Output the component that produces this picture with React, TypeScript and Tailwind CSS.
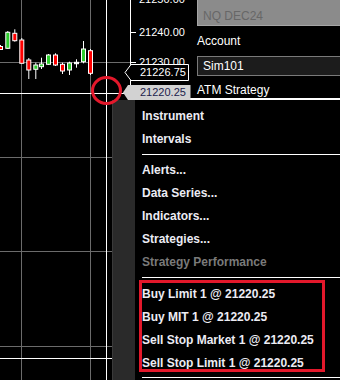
import React from 'react';

// Chart context menu with order entry (NinjaTrader-like)

const R = '#ff0000';
const G = '#2ecc2e';
const W = '#ffffff';

// [left, bodyTop, bodyBottom, wickTop, wickBottom, color]
const CANDLES: [number, number, number, number, number, string][] = [
  [-2, 46.5, 49.5, 45, 50, R],
  [5.3, 32.3, 48.3, 31, 49, G],
  [12.3, 33.3, 40.7, 29.3, 41.7, R],
  [19.3, 40, 63.3, 38, 63.3, R],
  [26.3, 60, 70, 58, 79, R],
  [33.3, 65, 69.3, 62.7, 79, G],
  [39, 64, 66.7, 57.7, 69, G],
  [46, 55, 64.3, 54, 65, G],
  [53, 55, 65, 53.3, 66, R],
  [60, 64.3, 71, 62.7, 74, R],
  [67, 63, 70, 61.7, 75, G],
  [74, 62.3, 63.7, 59.3, 67.7, W],
  [81, 49, 61.7, 41, 63.3, G],
  [88, 50.7, 73.3, 49, 75, R],
];

const ChartArea = () => (
  <div className="w-[130px] h-full shrink-0">
    <svg width="130" height="380" viewBox="0 0 130 380">
      <g stroke="#6b6b6b" strokeWidth="1" shapeRendering="crispEdges">
        <line x1="21.5" y1="0" x2="21.5" y2="380" />
        <line x1="90.5" y1="0" x2="90.5" y2="380" />
        <line x1="0" y1="62.5" x2="130" y2="62.5" />
        <line x1="0" y1="157.5" x2="130" y2="157.5" />
        <line x1="0" y1="251.5" x2="130" y2="251.5" />
        <line x1="0" y1="346.5" x2="130" y2="346.5" />
      </g>
      {CANDLES.map(([x, bt, bb, wt, wb, c], i) => (
        <g key={i}>
          <line x1={x + 2.5} y1={wt} x2={x + 2.5} y2={wb} stroke="#ffffff" strokeWidth="1" />
          <rect x={x + 0.5} y={bt} width="4" height={bb - bt} fill={c} stroke="#ffffff" strokeWidth="1" />
        </g>
      ))}
      <g stroke="#ffffff" strokeWidth="1" shapeRendering="crispEdges">
        <line x1="106.5" y1="0" x2="106.5" y2="380" />
        <line x1="0" y1="93.5" x2="124" y2="93.5" />
        <line x1="0" y1="358.5" x2="130" y2="358.5" />
      </g>
    </svg>
  </div>
);

const PriceAxis = () => (
  <div className="relative w-[60px] h-full shrink-0 border-l border-white text-[11px] text-white">
    <span className="absolute left-[8px] top-[-8px] leading-[14px]">21250.00</span>
    <div className="absolute left-0 top-[32px] w-[5px] h-px bg-white" />
    <span className="absolute left-[8px] top-[25px] leading-[14px]">21240.00</span>
    <div className="absolute left-0 top-[62px] w-[5px] h-px bg-white" />
    <span className="absolute left-[8px] top-[55px] leading-[14px]">21230.00</span>

    <div className="absolute left-[-7px] top-[63px] w-[66px] h-[19px]">
      <svg className="absolute inset-0" width="66" height="19" viewBox="0 0 66 19">
        <polygon points="1,9.5 7,1.5 64.5,1.5 64.5,17.5 7,17.5" fill="#000000" stroke="#ffffff" strokeWidth="1" />
      </svg>
      <span className="relative flex h-full items-center pl-[16px] leading-none">21226.75</span>
    </div>

    <div className="absolute left-[-8px] top-[85px] w-[68px] h-[15px]">
      <svg className="absolute inset-0" width="68" height="15" viewBox="0 0 68 15">
        <polygon points="0,7.5 5,0 67.5,0 67.5,15 5,15" fill="#d2d2d2" />
      </svg>
      <span className="relative flex h-full items-center pl-[17px] leading-none text-[#1c1c4c]">21220.25</span>
    </div>
  </div>
);

const SidePanel = () => (
  <div className="w-[150px] h-[100px] shrink-0 border-b-2 border-white pl-[7px] text-[12px] text-white">
    <div className="flex h-[26px] items-center border border-t-0 border-r-0 border-[#a6a6a6] bg-[#8b8b8b] pl-[5px] pt-[6px] text-[#676767] leading-[14px]">
      NQ DEC24
    </div>
    <div className="mt-[8px] leading-[14px]">Account</div>
    <div className="mt-[8px] flex h-[20px] items-center border border-r-0 border-[#7a7a7a] bg-[#1c1c1c] pl-[5px] leading-[14px]">
      Sim101
    </div>
    <div className="mt-[7px] leading-[14px]">ATM Strategy</div>
  </div>
);

const MenuItem = ({ label, disabled }: { label: string; disabled?: boolean }) => (
  <div className={`flex h-[23px] items-center whitespace-nowrap font-bold ${disabled ? 'text-[#7a7a7a]' : 'text-[#ececf4]'}`}>
    {label}
  </div>
);

const Separator = ({ className = 'h-[8px]' }: { className?: string }) => (
  <div className={`flex items-center ${className}`}>
    <div className="h-px w-full bg-white" />
  </div>
);

const ContextMenu = () => (
  <div className="absolute left-[112px] top-[100px] right-0 bottom-0 flex text-[12px]">
    <div className="w-[23px] shrink-0 border-l border-[#3a3a3a] bg-[#2a2a2a]" />
    <div className="flex-1 bg-black pl-[7px] pt-[4px]">
      <MenuItem label="Instrument" />
      <MenuItem label="Intervals" />
      <Separator />
      <MenuItem label="Alerts..." />
      <MenuItem label="Data Series..." />
      <MenuItem label="Indicators..." />
      <MenuItem label="Strategies..." />
      <MenuItem label="Strategy Performance" disabled />
      <Separator className="h-[9px]" />
      <MenuItem label="Buy Limit 1 @ 21220.25" />
      <MenuItem label="Buy MIT 1 @ 21220.25" />
      <MenuItem label="Sell Stop Market 1 @ 21220.25" />
      <MenuItem label="Sell Stop Limit 1 @ 21220.25" />
      <Separator className="h-[6px]" />
    </div>
  </div>
);

export default function App() {
  return (
    <div className="relative w-[340px] h-[380px] overflow-hidden bg-black font-['Liberation_Sans',Arial,sans-serif]">
      <div className="flex h-full">
        <ChartArea />
        <PriceAxis />
        <SidePanel />
      </div>

      <ContextMenu />

      {/* annotations */}
      <div className="absolute left-[139px] top-[280px] w-[186px] h-[92px] border-[3px] border-[#e3182b]" />
      <svg className="absolute left-[90px] top-[75px]" width="33" height="31" viewBox="0 0 33 31">
        <ellipse cx="16.5" cy="15.5" rx="14" ry="13" fill="none" stroke="#e3182b" strokeWidth="3" />
      </svg>
    </div>
  );
}
